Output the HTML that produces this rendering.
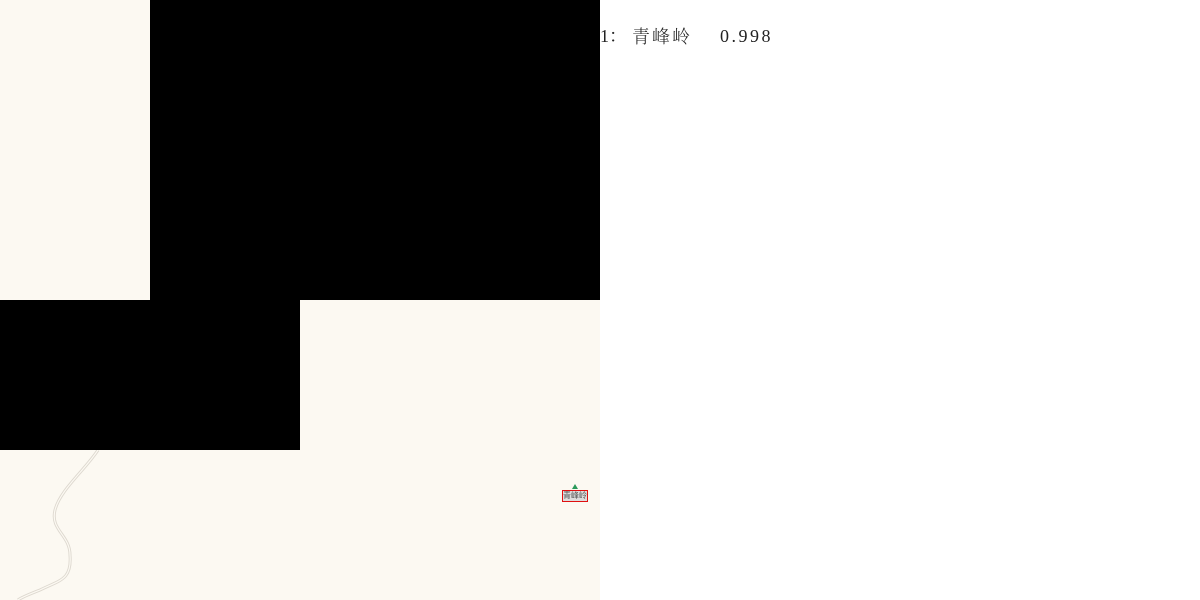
<!DOCTYPE html>
<html><head><meta charset="utf-8"><style>
html,body{margin:0;padding:0;width:1200px;height:600px;overflow:hidden;background:#fff}
.map{position:absolute;left:0;top:0;width:600px;height:600px;background:#fcf9f2}
.b{position:absolute;background:#000}
.t{position:absolute;top:24px;font-family:"Liberation Serif","Noto Serif CJK SC",serif;font-size:18px;color:#222;white-space:pre;line-height:24px}
.lbl{position:absolute;left:562px;top:490px;width:24px;height:10px;border:1.5px solid #e01010;background:#ddd;font-size:8px;line-height:10px;color:#555;font-family:"Noto Sans CJK SC",sans-serif;overflow:hidden;text-align:center}
</style></head><body>
<div class="map">
<svg width="600" height="600" style="position:absolute;left:0;top:0">
<path d="M98 450 C85 470 60 490 55 510 C50 530 70 535 70 555 C72 580 60 580 40 590 C30 594 22 597 18 600" fill="none" stroke="#ddd8cf" stroke-width="3"/>
<path d="M98 450 C85 470 60 490 55 510 C50 530 70 535 70 555 C72 580 60 580 40 590 C30 594 22 597 18 600" fill="none" stroke="#fcf9f2" stroke-width="1.2"/>
<path d="M572 489 L575 484 L578 489 Z" fill="#2a9a5a"/>
</svg>
<div class="b" style="left:150px;top:0;width:450px;height:300px"></div>
<div class="b" style="left:0;top:300px;width:300px;height:150px"></div>
<div class="lbl">青峰岭</div>
</div>
<div class="t" style="left:600px">1：</div>
<div class="t" style="left:632px;letter-spacing:2px;font-family:'Noto Serif CJK SC',serif;font-weight:300">青峰岭</div>
<div class="t" style="left:720px;letter-spacing:2.5px">0.998</div>
</body></html>
